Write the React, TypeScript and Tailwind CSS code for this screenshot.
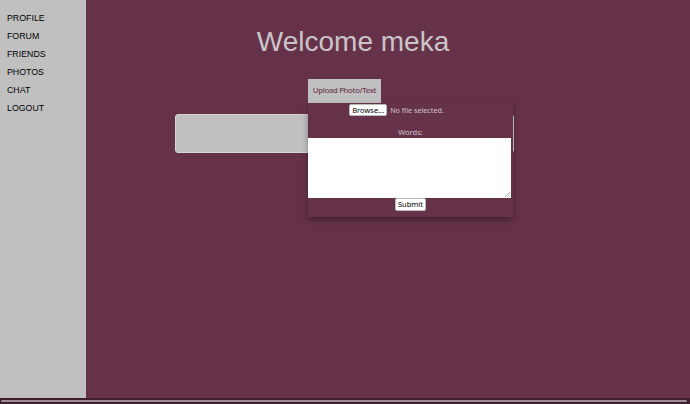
const navItems = ["PROFILE", "FORUM", "FRIENDS", "PHOTOS", "CHAT", "LOGOUT"];

// small ubuntu-ish ui font for the form bits
const ui = { fontFamily: '"Noto Sans", "DejaVu Sans", sans-serif' };

export default function App() {
  return (
    <div className="h-[404px] w-[690px] overflow-hidden bg-[#663249] flex flex-col">
      <div className="flex h-[398px]">
        {/* Sidebar */}
        <nav className="w-[86px] h-full bg-[#c0c0c0] pt-[9px] pl-[7px] flex flex-col font-['Liberation_Sans',Arial,sans-serif]">
          {navItems.map((item) => (
            <a
              key={item}
              href="#"
              className="text-[8.8px] leading-[18px] text-black"
            >
              {item}
            </a>
          ))}
        </nav>

        {/* Main */}
        <main className="flex-1 flex flex-col">
          <h1 className="mt-[25px] pr-[70px] text-center text-[28px] leading-[34px] text-[#cbc4c8] font-['Liberation_Sans',Arial,sans-serif]">
            Welcome meka
          </h1>

          <div className="relative mt-[20px] h-[80px]">
            {/* Upload toggle + popup */}
            <div className="absolute left-[222px] top-0 z-10">
              <button
                style={ui}
                className="w-[73px] h-[24px] bg-[#c0c0c0] text-[7.8px] tracking-[-0.35px] font-medium text-[#6e3a52] flex items-center justify-center"
              >
                Upload Photo/Text
              </button>
              <div
                style={ui}
                className="w-[205px] h-[114px] bg-[#663249] shadow-[0_3px_6px_rgba(0,0,0,0.35)] flex flex-col items-center"
              >
                <div className="flex items-center gap-[3px] ml-[-28px] mt-[1px]">
                  <span className="h-[12px] px-[2px] bg-white border border-[#bbb] rounded-[2px] text-[7.5px] leading-[10px] text-black">
                    Browse...
                  </span>
                  <span className="text-[7.2px] text-[#cfc4ca]">No file selected.</span>
                </div>
                <span className="mt-[11px] text-[7.5px] leading-[10px] text-[#cfc4ca]">Words:</span>
                <div className="relative mt-[1px] w-[203px] h-[60px] bg-white self-start">
                  <svg className="absolute right-[1px] bottom-[1px]" width="5" height="5" viewBox="0 0 5 5">
                    <path d="M5 0L0 5M5 2.5L2.5 5" stroke="#999" strokeWidth="0.8" />
                  </svg>
                </div>
                <span className="h-[13px] px-[2px] bg-white border border-[#bbb] rounded-[2px] text-[7.5px] leading-[11px] text-black">
                  Submit
                </span>
              </div>
            </div>

            {/* Gray bar */}
            <div className="ml-[89px] mt-[35px] w-[339px] h-[39px] bg-[#c0c0c0] border border-[#d6d6d6] rounded-[3px]" />
          </div>
        </main>
      </div>

      {/* Bottom scrollbar */}
      <div className="h-[6px] bg-[#3f1f2e] pt-[2px] px-[1px]">
        <div className="h-[2px] w-[686px] bg-[#a08a96] rounded-full" />
      </div>
    </div>
  );
}
